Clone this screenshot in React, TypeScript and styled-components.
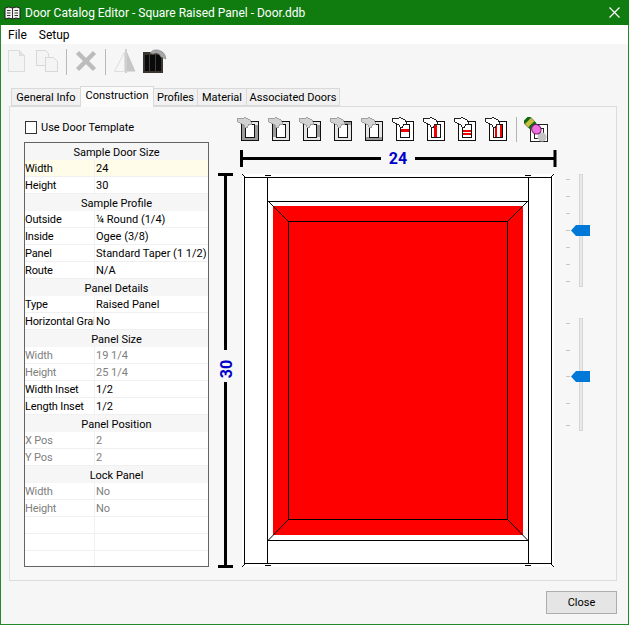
import React from "react";
import styled, { createGlobalStyle } from "styled-components";

const GlobalStyle = createGlobalStyle`
  html, body { margin: 0; padding: 0; background: #f6f6f6; }
  body { font-family: Roboto, "Liberation Sans", Arial, sans-serif; font-size: 11px; color: #000; }
`;

const Frame = styled.div`
  box-sizing: border-box;
  width: 629px;
  height: 625px;
  display: flex;
  flex-direction: column;
  background: #f6f6f6;
  border: 1px solid #25892b;
  border-top: none;
`;

const TitleBar = styled.div`
  height: 25px;
  margin: 0 -1px;
  background: #107c10;
  color: #fff;
  display: flex;
  align-items: center;
  padding-left: 4px;
  gap: 4px;
  font-size: 12px;
  position: relative;
  svg.close { position: absolute; right: 9px; top: 7px; }
`;

const MenuBar = styled.div`
  height: 19px;
  background: #fff;
  display: flex;
  align-items: center;
  padding-left: 7px;
  gap: 12px;
  font-size: 12px;
`;

const Toolbar = styled.div`
  height: 42px;
  box-sizing: border-box;
  padding: 5px 0 0 4px;
  display: flex;
  align-items: flex-start;
  gap: 6px;
`;

const ToolSep = styled.div`
  width: 1px;
  height: 26px;
  background: #b9b9b9;
  margin: 0 1px;
`;

const TabStrip = styled.div`
  display: flex;
  align-items: flex-end;
  height: 20px;
  padding-left: 10px;
  position: relative;
  z-index: 1;
`;

const Tab = styled.div<{ $active?: boolean; $width: number }>`
  box-sizing: border-box;
  width: ${(p) => p.$width}px;
  height: ${(p) => (p.$active ? 21 : 18)}px;
  margin-bottom: ${(p) => (p.$active ? -1 : 0)}px;
  background: ${(p) => (p.$active ? "#fbfbfb" : "#f1f1f1")};
  border: 1px solid #d9d9d9;
  border-bottom: ${(p) => (p.$active ? "none" : "1px solid #d9d9d9")};
  margin-left: -1px;
  text-align: center;
  line-height: ${(p) => (p.$active ? 18 : 17)}px;
  white-space: nowrap;
  &:first-child { margin-left: 0; }
`;

const Panel = styled.div`
  box-sizing: border-box;
  width: 608px;
  height: 475px;
  margin-left: 8px;
  border: 1px solid #dcdcdc;
  padding: 10px 0 0 14px;
  display: flex;
  background: #f7f7f7;
`;

const LeftColumn = styled.div`
  width: 186px;
`;

const CheckRow = styled.label`
  height: 20px;
  margin-bottom: 5px;
  padding-left: 1px;
  display: flex;
  align-items: center;
  gap: 4px;
`;

const CheckBox = styled.span`
  box-sizing: border-box;
  width: 12px;
  height: 13px;
  border: 1px solid #333;
  background: #fff;
`;

const PropGrid = styled.div`
  box-sizing: border-box;
  width: 185px;
  height: 425px;
  border: 1px solid #646464;
  background: #fff;
  overflow: hidden;
`;

const HeaderRow = styled.div`
  height: 17px;
  line-height: 20px;
  background: #f6f6f6;
  text-align: center;
`;

const Row = styled.div<{ $selected?: boolean; $disabled?: boolean }>`
  box-sizing: border-box;
  height: 17px;
  line-height: 18px;
  display: flex;
  border-bottom: 1px solid #f0f0f0;
  background: ${(p) => (p.$selected ? "#fffde9" : "#fff")};
  color: ${(p) => (p.$disabled ? "#808080" : "#000")};
`;

const NameCell = styled.div`
  box-sizing: border-box;
  width: 70px;
  overflow: hidden;
  white-space: nowrap;
  letter-spacing: -0.15px;
  border-right: 1px solid #f0f0f0;
`;

const ValueCell = styled.div`
  padding-left: 1px;
  white-space: nowrap;
  overflow: hidden;
  flex: 1;
`;

const RightColumn = styled.div`
  margin-left: 8px;
  display: flex;
  flex-direction: column;
`;

const DoorTools = styled.div`
  height: 24px;
  padding-left: 19px;
  margin-bottom: 9px;
  display: flex;
  gap: 7px;
`;

const DoorToolSep = styled.div`
  width: 1px;
  height: 25px;
  background: #b4b4b4;
`;

const CanvasRow = styled.div`
  display: flex;
`;

const SliderColumn = styled.div`
  margin: 24px 0 0 6px;
  display: flex;
  flex-direction: column;
  gap: 31px;
`;

const SliderBox = styled.div`
  position: relative;
  width: 26px;
  height: 113px;
`;

const SliderTrack = styled.div`
  box-sizing: border-box;
  position: absolute;
  left: 13px;
  top: 0;
  width: 4px;
  height: 113px;
  background: #e7eaea;
  border: 1px solid #d6d6d6;
`;

const SliderTick = styled.div`
  position: absolute;
  left: 0;
  width: 4px;
  height: 1px;
  background: #c8c8c8;
`;

const SliderThumb = styled.div`
  position: absolute;
  left: 5px;
  width: 19px;
  height: 11px;
  background: #0078d7;
  clip-path: polygon(5px 0, 100% 0, 100% 100%, 5px 100%, 0 50%);
`;

const Footer = styled.div`
  flex: 1;
  display: flex;
  justify-content: flex-end;
  align-items: flex-start;
  padding: 10px 11px 0 0;
`;

const CloseButton = styled.button`
  box-sizing: border-box;
  width: 71px;
  height: 23px;
  background: #e5e5e5;
  border: 1px solid #adadad;
  font: inherit;
  color: #000;
  padding: 0;
`;

type Shade = { l?: boolean; r?: boolean; t?: boolean; b?: boolean };

const BookIcon = () => (
  <svg width="17" height="16" viewBox="0 0 17 16">
    <path d="M1 3q4-2 7.500 0q3.500-2 7.500 0v11q-4-2-7.500 0q-3.500-2-7.500 0z" fill="#f2f2f2" stroke="#1c1c1c" />
    <path d="M8.500 3v11M3 5.500h3.500M3 8h3.500M3 10.500h3.500M10.500 5.500h3.500M10.500 8h3.500M10.500 10.500h3.500" stroke="#333" fill="none" />
  </svg>
);

const NewIcon = () => (
  <svg width="24" height="24" viewBox="0 0 24 24" shapeRendering="crispEdges">
    <path d="M3.500 1.500h11l5 5v16h-16z" fill="#f4f4f4" stroke="#dcdcdc" />
    <path d="M14.500 1.500v5h5" fill="#e2e2e2" stroke="#dcdcdc" />
  </svg>
);

const CopyIcon = () => (
  <svg width="24" height="24" viewBox="0 0 24 24" shapeRendering="crispEdges">
    <path d="M1.500 1.500h9l3 3v12h-12z" fill="#f4f4f4" stroke="#d8d8d8" />
    <path d="M10.500 8.500h8l4 4v10h-12z" fill="#f4f4f4" stroke="#d8d8d8" />
  </svg>
);

const DeleteIcon = () => (
  <svg width="24" height="24" viewBox="0 0 24 24">
    <path d="M3.500 3.500l17 17M20.500 3.500l-17 17" stroke="#bcbcbc" strokeWidth="4.500" fill="none" />
  </svg>
);

const MirrorIcon = () => (
  <svg width="24" height="24" viewBox="0 0 24 24">
    <path d="M11.500 3L1.500 22.500H11.500z" fill="#f6f6f6" stroke="#dedede" />
    <path d="M13 0v24" stroke="#a8a8a8" />
    <path d="M14 3l8.500 19.500H14z" fill="#c6c6c6" />
  </svg>
);

const LockDoorIcon = () => (
  <svg width="24" height="24" viewBox="0 0 24 24">
    <rect x="0" y="3" width="20" height="21" fill="#3b3530" />
    <rect x="2" y="6" width="16" height="16" fill="#0a0a0a" />
    <path d="M6.500 6v16M12.500 6v16" stroke="#3f3f3f" fill="none" />
    <path d="M7 4q3-4 8-3q5 1 7 5l1 4-5-2-2-3q-3-2-6 0z" fill="#a8a8a8" stroke="#7f7f7f" strokeWidth="0.600" />
  </svg>
);

const Hand = ({ soft }: { soft?: boolean }) => (
  <path
    d="M0.500 1.500h5l3-1 5 3v1l1 1v2h-3l-1 3h-2l-2-3-3-1-3-2z"
    fill={soft ? "#d2d2d2" : "#fff"}
    stroke={soft ? "#a0a0a0" : "#222"}
    shapeRendering="crispEdges"
  />
);

const ShadedIcon = ({ l, r, t, b }: Shade) => (
  <svg width="24" height="24" viewBox="0 0 24 24" shapeRendering="crispEdges">
    <rect x="4.500" y="4.500" width="17" height="19" fill="#fff" stroke="#111" />
    <rect x="5" y="5" width="4" height="18" fill={l ? "#9c9c9c" : "#e6e6e6"} />
    <rect x="17" y="5" width="4" height="18" fill={r ? "#9c9c9c" : "#e6e6e6"} />
    <rect x="5" y="5" width="16" height="3" fill={t ? "#9c9c9c" : "#e6e6e6"} />
    <rect x="5" y="20" width="16" height="3" fill={b ? "#9c9c9c" : "#e6e6e6"} />
    <rect x="8.500" y="7.500" width="9" height="13" fill="#fff" stroke="#111" />
    <Hand soft />
  </svg>
);

const RailIcon = ({ bars }: { bars: number[][] }) => (
  <svg width="24" height="24" viewBox="0 0 24 24" shapeRendering="crispEdges">
    <rect x="4.500" y="4.500" width="17" height="19" fill="#fff" stroke="#111" />
    <rect x="8.500" y="7.500" width="9" height="13" fill="#fff" stroke="#111" />
    {bars.map((bar) => (
      <rect key={bar.join()} x={bar[0]} y={bar[1]} width={bar[2]} height={bar[3]} fill="#f00000" />
    ))}
    <Hand />
  </svg>
);

const PaintIcon = () => (
  <svg width="24" height="25" viewBox="0 0 24 25">
    <rect x="6.500" y="7.500" width="17" height="17" fill="#fff" stroke="#222" shapeRendering="crispEdges" />
    <rect x="10.500" y="11.500" width="9" height="10" fill="#fff" stroke="#222" shapeRendering="crispEdges" />
    <circle cx="18" cy="20" r="4.500" fill="#c4c4c4" />
    <g transform="rotate(-45 6 6)">
      <rect x="1.500" y="0" width="9" height="3" fill="#0c6b0c" />
      <rect x="1.500" y="3" width="9" height="5" fill="#c9c13a" stroke="#333" strokeWidth="0.500" />
      <rect x="1.500" y="8" width="9" height="3" fill="#0c6b0c" />
      <ellipse cx="6" cy="15" rx="4.500" ry="5" fill="#f070e0" stroke="#7a1a70" />
    </g>
  </svg>
);

const DoorDrawing = () => (
  <svg width="342" height="422" viewBox="218 150 342 422" fontFamily="Roboto, 'Liberation Sans', Arial, sans-serif">
    <rect x="242" y="174" width="312" height="393" fill="#fff" />
    <g stroke="#000" strokeWidth="3" fill="none">
      <path d="M241.500 150v17M555 150v17M241 158.500h140M415 158.500h140" />
      <path d="M218 174.500h15M218 566.500h15M225.500 174v176M225.500 382v185" />
    </g>
    <text x="398" y="164" fontSize="16" fontWeight="700" fill="#0000c8" textAnchor="middle">24</text>
    <text x="0" y="0" fontSize="16" fontWeight="700" fill="#0000c8" textAnchor="middle" transform="translate(232 369) rotate(-90)">30</text>
    <rect x="273" y="206" width="250" height="329" fill="#f00" />
    <g stroke="#000" strokeWidth="1" fill="none" shapeRendering="crispEdges">
      <rect x="244.500" y="177.500" width="307" height="386" />
      <path d="M267.500 177.500v386M528.500 177.500v386M268 201.500h260M268 540.500h260" />
      <rect x="288.500" y="221.500" width="219" height="298" />
    </g>
    <g stroke="#000" fill="none">
      <path d="M268 201l20.500 20.500M528 201l-20.500 20.500M268 540.500l20.500-21M528 540.500l-20.500-21" />
      <path d="M242 174l3 3M554 174l-3 3M242 567l3-3M554 567l-3-3M265 175.500h6M525 175.500h6M525 565.500h6M265 565.500h6" />
    </g>
  </svg>
);

const Slider = ({ ticks, thumb }: { ticks: number[]; thumb: number }) => (
  <SliderBox>
    <SliderTrack />
    {ticks.map((t) => (
      <SliderTick key={t} style={{ top: t }} />
    ))}
    <SliderThumb style={{ top: thumb }} />
  </SliderBox>
);

type GridItem =
  | { header: string }
  | { name: string; value: string; disabled?: boolean; selected?: boolean };

const gridItems: GridItem[] = [
  { header: "Sample Door Size" },
  { name: "Width", value: "24", selected: true },
  { name: "Height", value: "30" },
  { header: "Sample Profile" },
  { name: "Outside", value: "¼ Round (1/4)" },
  { name: "Inside", value: "Ogee (3/8)" },
  { name: "Panel", value: "Standard Taper (1 1/2)" },
  { name: "Route", value: "N/A" },
  { header: "Panel Details" },
  { name: "Type", value: "Raised Panel" },
  { name: "Horizontal Grai", value: "No" },
  { header: "Panel Size" },
  { name: "Width", value: "19 1/4", disabled: true },
  { name: "Height", value: "25 1/4", disabled: true },
  { name: "Width Inset", value: "1/2" },
  { name: "Length Inset", value: "1/2" },
  { header: "Panel Position" },
  { name: "X Pos", value: "2", disabled: true },
  { name: "Y Pos", value: "2", disabled: true },
  { header: "Lock Panel" },
  { name: "Width", value: "No", disabled: true },
  { name: "Height", value: "No", disabled: true },
  { name: "", value: "" },
  { name: "", value: "" },
  { name: "", value: "" },
];

const App = () => {
  return (
    <Frame>
      <GlobalStyle />
      <TitleBar>
        <BookIcon />
        <span>Door Catalog Editor - Square Raised Panel - Door.ddb</span>
        <svg className="close" width="11" height="11" viewBox="0 0 11 11">
          <path d="M0.500 0.500l10 10M10.500 0.500l-10 10" stroke="#fff" strokeWidth="1.200" />
        </svg>
      </TitleBar>
      <MenuBar>
        <span>File</span>
        <span>Setup</span>
      </MenuBar>
      <Toolbar>
        <NewIcon />
        <CopyIcon />
        <ToolSep />
        <DeleteIcon />
        <ToolSep />
        <MirrorIcon />
        <LockDoorIcon />
      </Toolbar>
      <TabStrip>
        <Tab $width={70}>General Info</Tab>
        <Tab $width={74} $active>Construction</Tab>
        <Tab $width={45}>Profiles</Tab>
        <Tab $width={50}>Material</Tab>
        <Tab $width={94}>Associated Doors</Tab>
      </TabStrip>
      <Panel>
        <LeftColumn>
          <CheckRow>
            <CheckBox />
            Use Door Template
          </CheckRow>
          <PropGrid>
            {gridItems.map((item, i) =>
              "header" in item ? (
                <HeaderRow key={i}>{item.header}</HeaderRow>
              ) : (
                <Row key={i} $selected={item.selected} $disabled={item.disabled}>
                  <NameCell>{item.name}</NameCell>
                  <ValueCell>{item.value}</ValueCell>
                </Row>
              )
            )}
          </PropGrid>
        </LeftColumn>
        <RightColumn>
          <DoorTools>
            <ShadedIcon l r b />
            <ShadedIcon l />
            <ShadedIcon r />
            <ShadedIcon t />
            <ShadedIcon b />
            <RailIcon bars={[[9, 12, 8, 3]]} />
            <RailIcon bars={[[11, 8, 3, 12]]} />
            <RailIcon bars={[[9, 13, 8, 2], [9, 16, 8, 2]]} />
            <RailIcon bars={[[10, 8, 2, 12], [15, 8, 2, 12]]} />
            <DoorToolSep />
            <PaintIcon />
          </DoorTools>
          <CanvasRow>
            <DoorDrawing />
            <SliderColumn>
              <Slider ticks={[5, 22, 39, 56, 73, 90, 107]} thumb={51} />
              <Slider ticks={[5, 32, 58, 85, 107]} thumb={53} />
            </SliderColumn>
          </CanvasRow>
        </RightColumn>
      </Panel>
      <Footer>
        <CloseButton>Close</CloseButton>
      </Footer>
    </Frame>
  );
};

export default App;
